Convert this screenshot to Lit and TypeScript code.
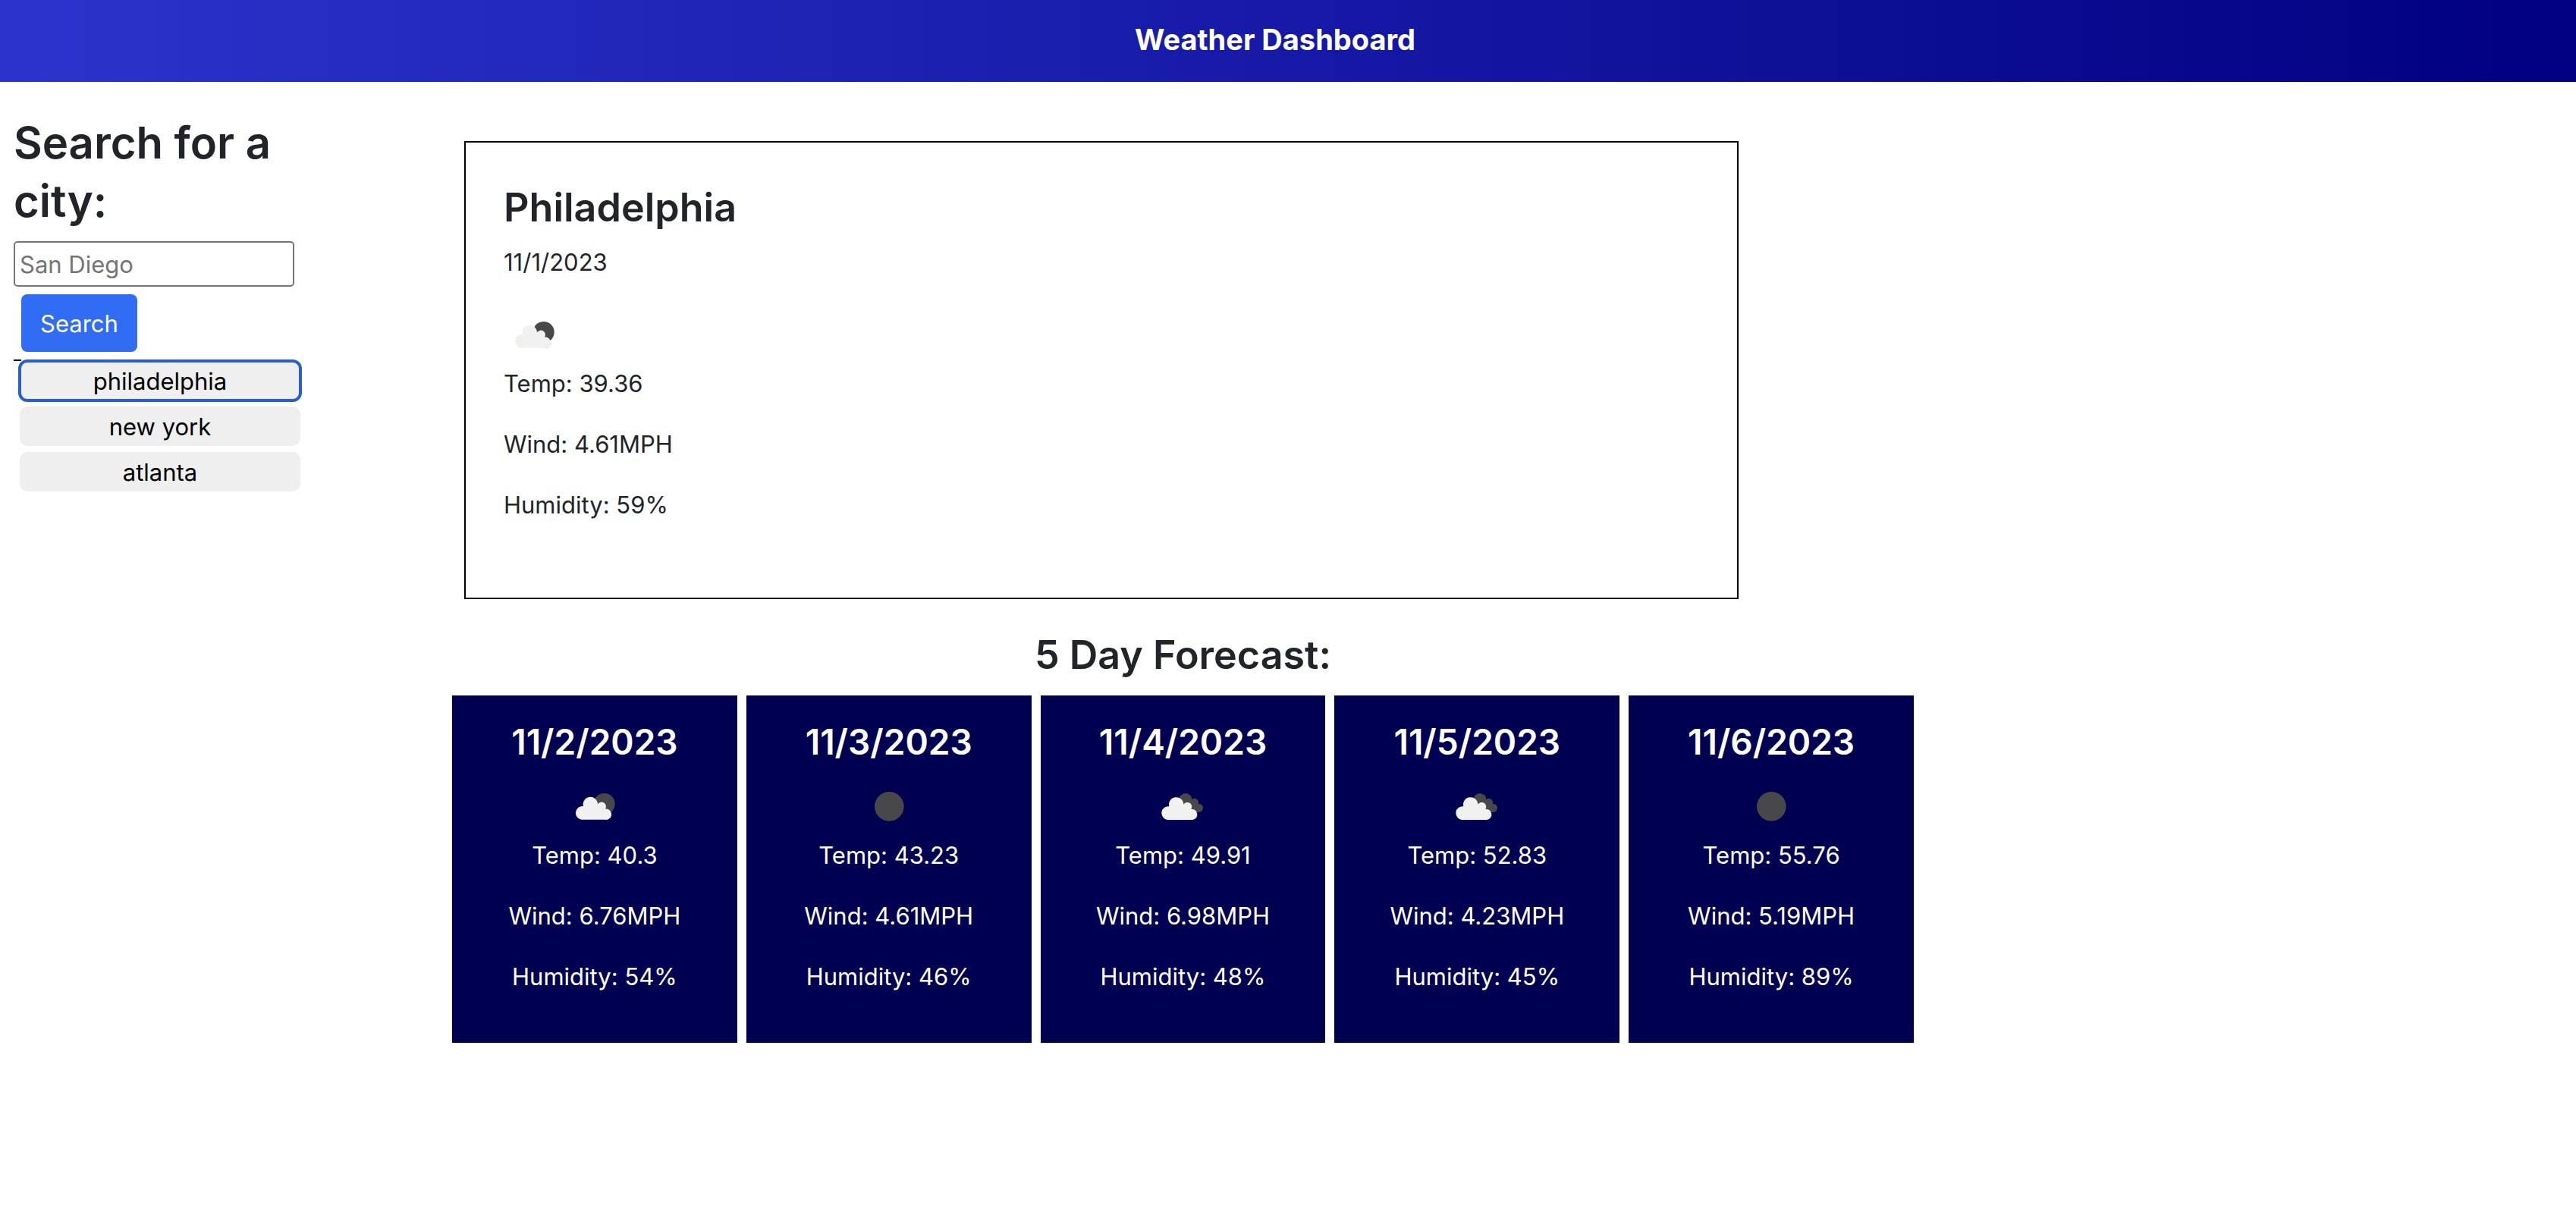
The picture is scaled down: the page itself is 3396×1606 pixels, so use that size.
import { LitElement, html, css, svg } from "lit";
import { customElement, property, state } from "lit/decorators.js";

type Sky = "few" | "broken" | "clear";

interface Reading {
  date: string;
  sky: Sky;
  temp: string;
  wind: string;
  humidity: string;
}

const FORECAST: Reading[] = [
  { date: "11/2/2023", sky: "few", temp: "40.3", wind: "6.76", humidity: "54" },
  { date: "11/3/2023", sky: "clear", temp: "43.23", wind: "4.61", humidity: "46" },
  { date: "11/4/2023", sky: "broken", temp: "49.91", wind: "6.98", humidity: "48" },
  { date: "11/5/2023", sky: "broken", temp: "52.83", wind: "4.23", humidity: "45" },
  { date: "11/6/2023", sky: "clear", temp: "55.76", wind: "5.19", humidity: "89" },
];

const TODAY: Reading = { date: "11/1/2023", sky: "few", temp: "39.36", wind: "4.61", humidity: "59" };

const CLOUD =
  "M68 173 A26 26 0 1 1 75 120 A29 29 0 1 1 132 112 A17 17 0 0 1 162 131 A21 21 0 0 1 168 173 Z";

@customElement("sky-icon")
export class SkyIcon extends LitElement {
  static styles = css`
    :host {
      display: block;
      width: 80px;
      height: 80px;
    }
    svg {
      display: block;
      width: 100%;
      height: 100%;
    }
  `;

  @property() sky: Sky = "clear";

  private shapes() {
    if (this.sky === "clear") return svg`<circle cx="121" cy="121" r="58" fill="#48484a" />`;
    if (this.sky === "few") {
      return svg`
        <circle cx="158" cy="111" r="42" fill="#48484a" />
        <path d=${CLOUD} fill="#f1f1ef" stroke="#2c2c34" stroke-opacity="0.35" stroke-width="3" paint-order="stroke"
          clip-path="circle(43px at 158px 111px)" />
        <path d=${CLOUD} fill="#f1f1ef" />`;
    }
    return svg`
      <g fill="#48484a">
        <circle cx="132" cy="95" r="26" />
        <circle cx="167" cy="105" r="16" />
        <circle cx="184" cy="127" r="17" />
        <path d="M132 95 L166 95 L186 120 L184 144 L150 144 Z" />
      </g>
      <path d=${CLOUD} transform="translate(-8 1)" fill="#f1f1ef" />`;
  }

  render() {
    return html`<svg viewBox="0 0 240 240" aria-hidden="true">${this.shapes()}</svg>`;
  }
}

@customElement("app-root")
export class AppRoot extends LitElement {
  static styles = css`
    :host {
      display: block;
      font-family: Inter, "Liberation Sans", sans-serif;
      font-size: 31px;
      line-height: 50px;
      color: #212529;
    }
    * {
      box-sizing: border-box;
    }
    h1,
    h2,
    h3,
    h4,
    p {
      margin: 0;
      font-weight: 600;
    }
    p {
      font-weight: 400;
      margin-bottom: 30px;
    }
    .banner {
      padding: 22px 34px 26px 0;
      background: linear-gradient(90deg, #2c33cc, #000080);
      color: #fff;
      text-align: center;
    }
    .banner h1 {
      font-size: 38px;
      line-height: 60px;
      font-weight: 700;
    }
    .layout {
      display: grid;
      grid-template-columns: 596fr 1927fr 873fr;
      align-items: start;
    }
    .sidebar {
      width: 68%;
      padding: 42px 0 0 18px;
    }
    .sidebar h2 {
      font-size: 58px;
      line-height: 77px;
      margin-bottom: 14px;
    }
    button,
    input {
      font: inherit;
    }
    .search {
      display: flex;
      flex-direction: column;
      align-items: flex-start;
      gap: 10px;
      padding-bottom: 10px;
    }
    .search input {
      width: 370px;
      height: 60px;
      padding: 2px 6px;
      border: 2px solid #767676;
      border-radius: 5px;
      background: #fff;
      color: #212529;
    }
    .search input::placeholder {
      color: #757575;
      opacity: 1;
    }
    .search button {
      margin-left: 10px;
      padding: 14px 25px 12px;
      border: 0;
      border-radius: 8px;
      background: #316cf4;
      color: #fff;
    }
    .history {
      display: flex;
      flex-direction: column;
      gap: 8px;
      width: 378px;
      padding: 2px 0 0 8px;
      background: linear-gradient(#000, #000) 0 0 / 10px 2px no-repeat;
    }
    .history button {
      height: 52px;
      padding: 2px 0 0;
      border: 0;
      border-radius: 10px;
      background: #efefef;
      color: #000;
    }
    .history button.active {
      outline: 4px solid #285fc8;
      outline-offset: -2px;
    }
    .today {
      width: 1680px;
      max-width: 100%;
      margin: 78px 0 0 16px;
      padding: 52px 50px 67px;
      border: 2px solid #000;
    }
    .today h3 {
      font-size: 52px;
      line-height: 67px;
      margin-bottom: 14px;
    }
    .title {
      margin: 40px 0 20px;
      font-size: 52px;
      line-height: 67px;
      text-align: center;
    }
    .days {
      display: grid;
      grid-template-columns: repeat(5, 1fr);
      gap: 12px;
    }
    .day {
      display: flex;
      flex-direction: column;
      align-items: center;
      padding: 32px 16px;
      background: #000052;
      color: #fff;
    }
    .day h4 {
      font-size: 46px;
      line-height: 58px;
      margin-bottom: 16px;
    }
  `;

  @state() private active = "philadelphia";

  private details(r: Reading) {
    return html`
      <sky-icon sky=${r.sky}></sky-icon>
      <p>Temp: ${r.temp}</p>
      <p>Wind: ${r.wind}MPH</p>
      <p>Humidity: ${r.humidity}%</p>
    `;
  }

  render() {
    return html`
      <header class="banner"><h1>Weather Dashboard</h1></header>
      <div class="layout">
        <aside class="sidebar">
          <h2 id="search-title">Search for a city:</h2>
          <form class="search" @submit=${(e: Event) => e.preventDefault()}>
            <input type="text" placeholder="San Diego" aria-labelledby="search-title" />
            <button type="submit">Search</button>
          </form>
          <div class="history">
            ${["philadelphia", "new york", "atlanta"].map(
              (city) => html`<button
                type="button"
                class=${city === this.active ? "active" : ""}
                @click=${() => (this.active = city)}
              >${city}</button>`
            )}
          </div>
        </aside>
        <main>
          <section class="today">
            <h3>Philadelphia</h3>
            <p>${TODAY.date}</p>
            ${this.details(TODAY)}
          </section>
          <h3 class="title">5 Day Forecast:</h3>
          <section class="days">
            ${FORECAST.map((r) => html`<article class="day"><h4>${r.date}</h4>${this.details(r)}</article>`)}
          </section>
        </main>
      </div>
    `;
  }
}
